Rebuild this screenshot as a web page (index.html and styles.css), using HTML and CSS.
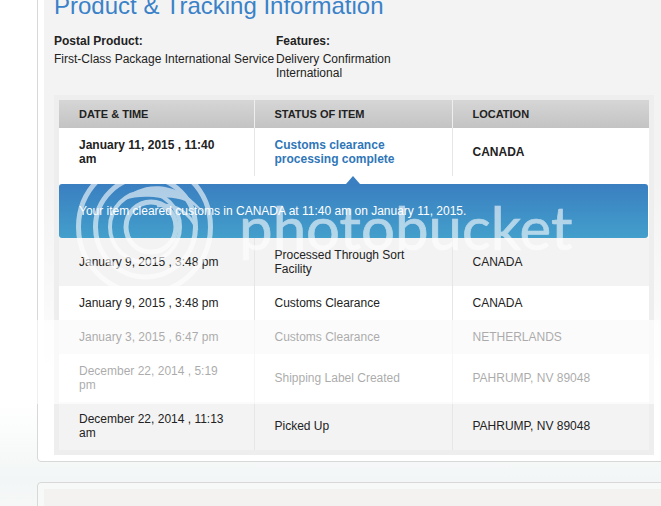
FILE: index.html
```html
<!DOCTYPE html>
<html lang="en">
<head>
<meta charset="utf-8">
<title>Product &amp; Tracking Information</title>
<link rel="stylesheet" href="styles.css">
</head>
<body>
<main class="page">
  <section class="card card-main">
    <div class="panel">
      <h2 class="title">Product &amp; Tracking Information</h2>
      <div class="meta">
        <div class="meta-product">
          <h3 class="meta-label">Postal Product:</h3>
          <p class="meta-value">First-Class Package International Service</p>
        </div>
        <div class="meta-features">
          <h3 class="meta-label">Features:</h3>
          <p class="meta-value">Delivery Confirmation<br>International</p>
        </div>
      </div>
      <div class="table-frame">
        <table class="track">
          <colgroup><col class="col-a"><col class="col-b"><col class="col-c"></colgroup>
          <thead>
            <tr class="head"><th>DATE &amp; TIME</th><th>STATUS OF ITEM</th><th>LOCATION</th></tr>
          </thead>
          <tbody>
            <tr class="r48 latest">
              <td>January 11, 2015 , 11:40 am</td>
              <td class="status-link">Customs clearance processing complete</td>
              <td>CANADA</td>
            </tr>
            <tr class="alert-row">
              <td colspan="3"><div class="alert">Your item cleared customs in CANADA at 11:40 am on January 11, 2015.</div></td>
            </tr>
            <tr class="r48 alt">
              <td>January 9, 2015 , 3:48 pm</td>
              <td>Processed Through Sort Facility</td>
              <td>CANADA</td>
            </tr>
            <tr class="r34">
              <td>January 9, 2015 , 3:48 pm</td>
              <td>Customs Clearance</td>
              <td>CANADA</td>
            </tr>
            <tr class="r34 alt">
              <td>January 3, 2015 , 6:47 pm</td>
              <td>Customs Clearance</td>
              <td>NETHERLANDS</td>
            </tr>
            <tr class="r48">
              <td>December 22, 2014 , 5:19 pm</td>
              <td>Shipping Label Created</td>
              <td>PAHRUMP, NV 89048</td>
            </tr>
            <tr class="r48 alt">
              <td>December 22, 2014 , 11:13 am</td>
              <td>Picked Up</td>
              <td>PAHRUMP, NV 89048</td>
            </tr>
          </tbody>
        </table>
      </div>
    </div>
  </section>
  <section class="card card-next"><div class="panel-next"></div></section>
</main>
<div class="haze"></div>
<div class="watermark">
  <svg class="wm-logo" width="150" height="150" viewBox="0 0 150 150" fill="none" stroke="#fff">
    <circle cx="71.5" cy="75" r="66" stroke-width="5"/>
    <circle cx="72.5" cy="75" r="50" stroke-width="5"/>
    <circle cx="72" cy="75" r="35" stroke-width="4"/>
    <circle cx="78" cy="75" r="25" stroke-width="5"/>
    <path d="M52 48C62 33 102 22 132 62C118 48 100 44 88 46C76 44 62 44 52 48Z" fill="#fff" stroke="none"/>
    <path d="M84 54C102 50 118 62 124 78" stroke-width="3"/>
  </svg>
  <span class="wm-text">photobucket</span>
</div>
</body>
</html>
```
FILE: styles.css
```css
* { box-sizing: border-box; }
html, body { margin: 0; height: 506px; overflow: hidden; }
body {
  position: relative;
  font: 12px/14px "Liberation Sans", Arial, sans-serif;
  color: #222;
  background: linear-gradient(#fff 0, #fff 404px, #f3f6f6 480px, #f6f8f8 506px);
}
.page { width: 720px; margin-top: -24px; padding-left: 37px; }
.card {
  border: 1px solid #d8d8d8;
  border-radius: 4px;
  padding: 6px;
  width: 683px;
}
.card-main { height: 486px; background: #fff; }
.card-next { margin-top: 20px; height: 60px; background: #f7f9f9; }
.panel {
  height: 472px;
  padding: 0 10px;
  background: linear-gradient(#f4f3f3 0, #f4f3f3 200px, #fafafa 330px, #fff 400px);
}
.panel-next { height: 60px; background: #f3f2f0; }
.title {
  margin: 0;
  padding-top: 9px;
  font-size: 24px;
  line-height: 28px;
  font-weight: 400;
  color: #3a82c8;
}
.meta { display: flex; margin-top: 14px; }
.meta-product { width: 222px; }
.meta-label { margin: 0 0 4px; font-size: 12px; line-height: 14px; font-weight: 700; }
.meta-value { margin: 0; }
.table-frame {
  margin-top: 15px;
  width: 600px;
  padding: 5px;
  background: #eee;
}
.track {
  width: 590px;
  table-layout: fixed;
  border-collapse: collapse;
  background: #fff;
}
.col-a { width: 195px; }
.col-b { width: 198px; }
.col-c { width: 197px; }
.track th, .track td {
  padding: 0 20px;
  text-align: left;
  vertical-align: middle;
}
.track td + td { border-left: 1px solid #e6e6e6; }
.head { height: 28px; background: linear-gradient(#d6d6d6, #c3c3c3); }
.track th { font-size: 11px; font-weight: 700; color: #222; }
.track th + th { border-left: 1px solid #eee; }
.r48 { height: 48px; }
.r34 { height: 34px; }
.alt { background: #f3f3f3; }
.latest td { font-weight: 700; }
.track .status-link { color: #2f76b8; }
.alert-row { height: 62px; }
.track .alert-row td { padding: 8px 1px 0 0; border: 0; }
.alert {
  position: relative;
  height: 54px;
  padding: 20px 20px 0;
  border-radius: 3px;
  color: #fff;
  background: linear-gradient(#3a7fc1, #439fcb);
}
.alert::before {
  content: "";
  position: absolute;
  left: 287px;
  top: -8px;
  border: 7px solid transparent;
  border-top: 0;
  border-bottom: 8px solid #3a7fc1;
}
.haze {
  position: absolute;
  left: 0;
  top: 320px;
  width: 661px;
  height: 84px;
  background: rgba(255, 255, 255, .62);
}
.watermark {
  position: absolute;
  left: 0;
  top: 0;
  width: 661px;
  height: 506px;
  opacity: .6;
  pointer-events: none;
}
.wm-logo { position: absolute; left: 73px; top: 152px; }
.wm-text {
  position: absolute;
  left: 239px;
  top: 191px;
  font: 400 60px/72px Lato, "Open Sans", sans-serif;
  -webkit-text-stroke: .7px #fff;
  color: #fff;
  white-space: nowrap;
}
```
